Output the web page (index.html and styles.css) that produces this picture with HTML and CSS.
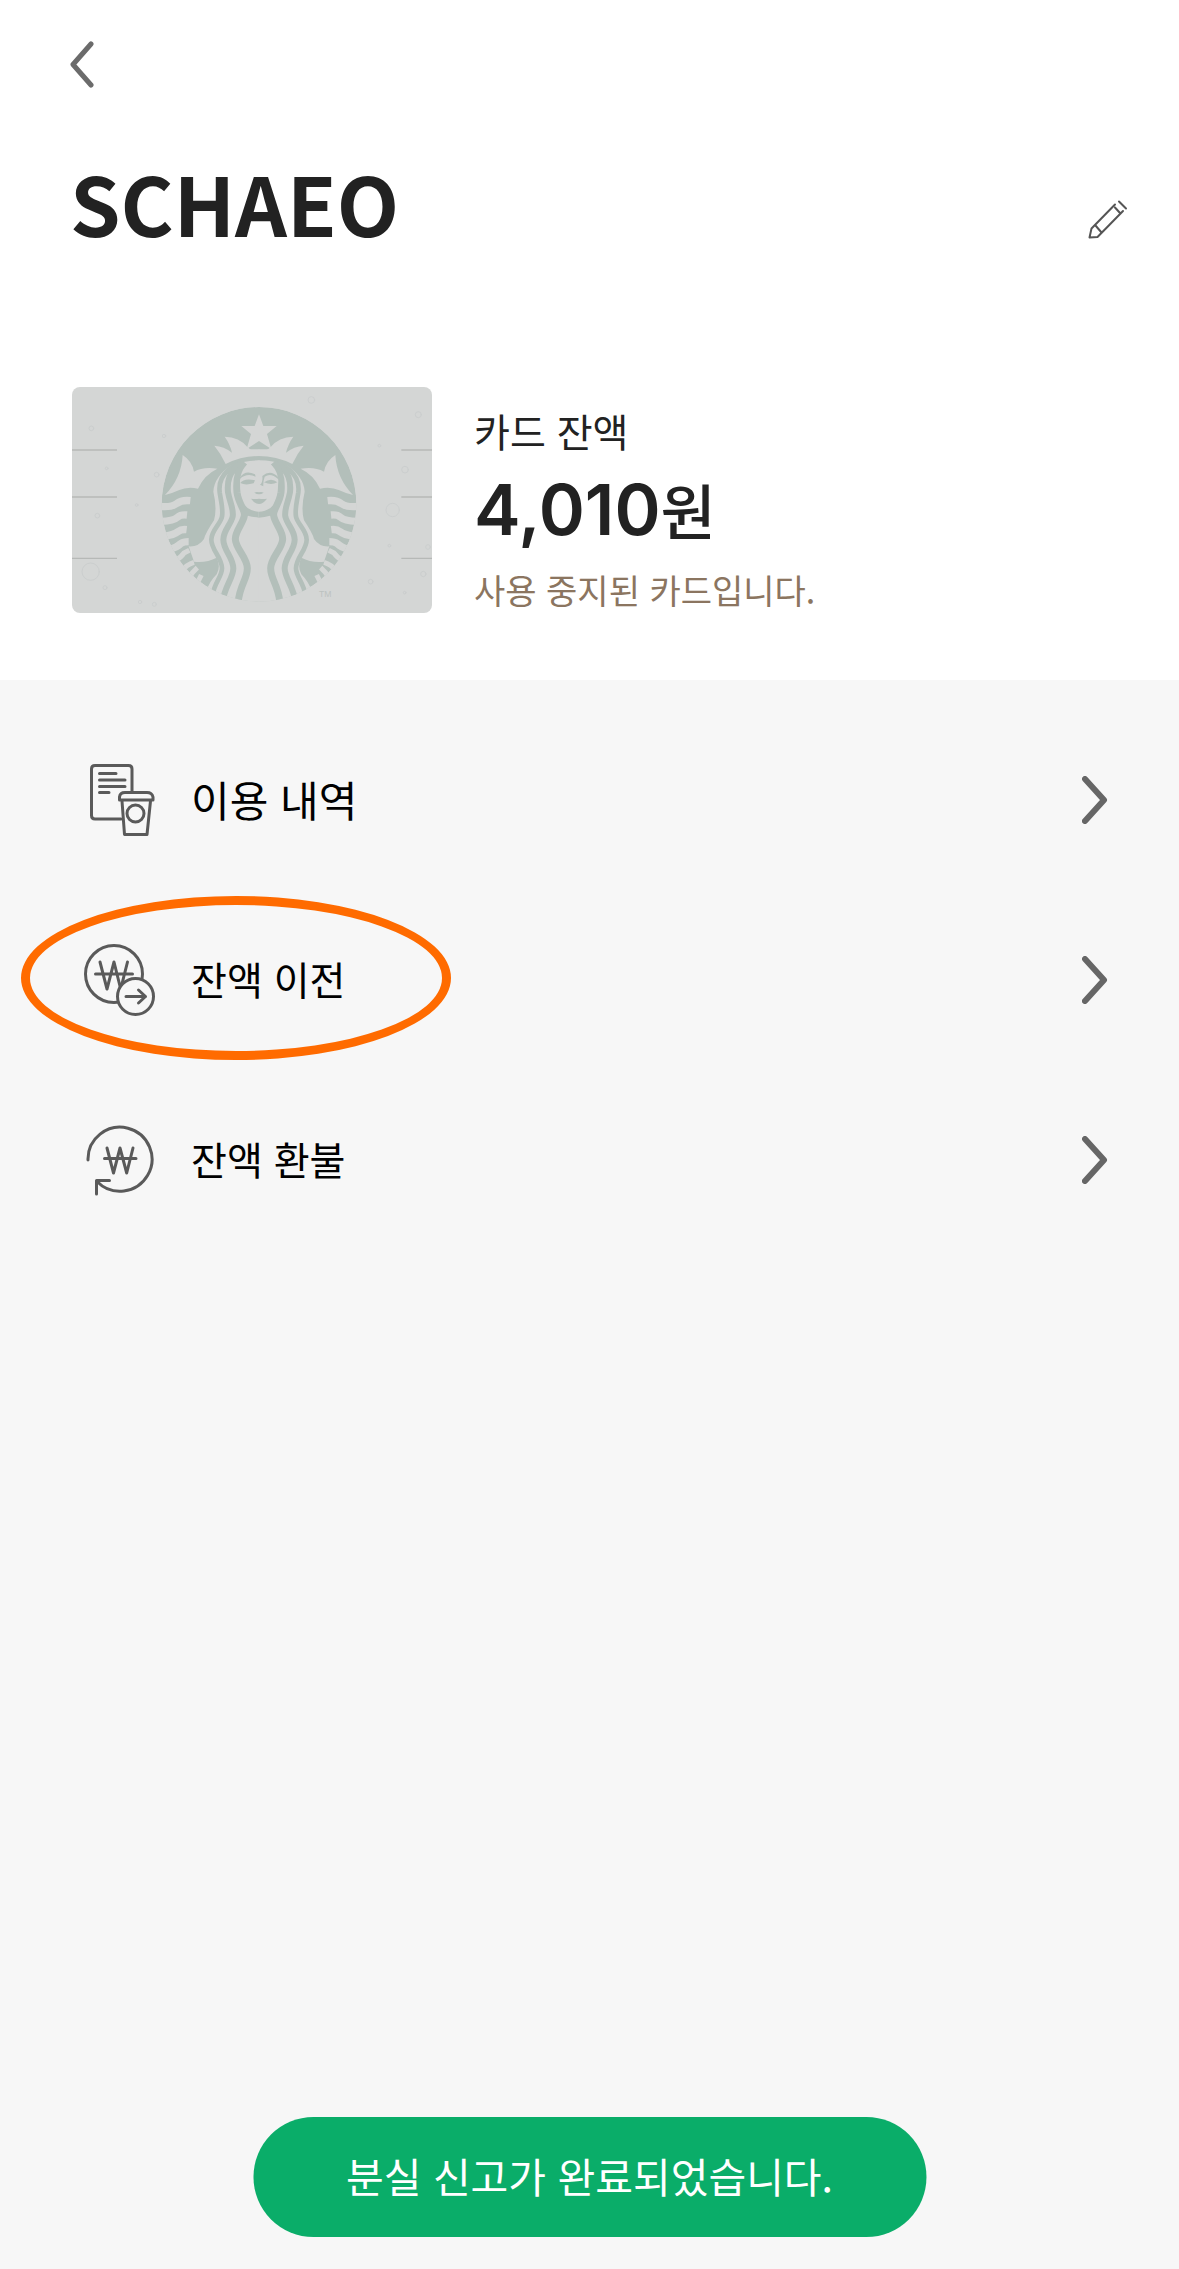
FILE: index.html
```
<!DOCTYPE html>
<html lang="ko">
<head>
    <meta charset="UTF-8">
    <meta name="viewport" content="width=device-width, initial-scale=1.0">
    <title>SCHAEO</title>
    <link rel="stylesheet" href="styles.css">
</head>
<body>
    <header class="header">
        <button class="icon-btn" type="button" aria-label="뒤로">
            <svg class="back-icon" viewBox="0 0 24 48"><path d="M21 4 L3 24.500 L21 45"/></svg>
        </button>
        <div class="title-row">
            <h1>SCHAEO</h1>
            <button class="icon-btn" type="button" aria-label="이름 수정">
                <svg class="edit-icon" viewBox="0 0 40 40"><path d="M27 4.500 L3.500 28.500 L1.500 37.500 L9.500 37 L35 11 M7.500 25.500 L13.500 32.500 M27 7.500 L32 13 M31 1.500 L38 8.500"/></svg>
            </button>
        </div>
    </header>

    <section class="card">
        <svg class="card-image" viewBox="36 36 1080 678" role="img" aria-label="카드 이미지">
            <defs>
                <clipPath id="round"><circle cx="597" cy="388" r="292"/></clipPath>
                <g id="half">
                    <!-- crown and tail -->
                    <path class="light" d="M497 267 Q483 236 463 212 Q492 214 516 233 Q510 207 494 185 Q538 186 562 216 L572 223 L598 223 L598 243 Q545 243 497 267Z"/>
                    <path class="light" d="M315 360 Q364 310 368 240 Q396 258 402 290 Q430 274 472 281 Q432 300 414 341 Q382 334 356 346 Q340 354 315 360Z"/>
                    <!-- scales -->
                    <path class="scale" d="M298 394 Q334 398 350 386 Q365 374 391 377 M300 439 Q340 438 352 427 Q362 418 381 420 M310 484 Q342 480 354 470 Q364 462 380 464 M328 524 Q352 516 362 506 Q370 500 386 500"/>
                    <path class="scale thin" d="M345 558 Q364 546 372 534 L388 526 M366 588 Q380 568 402 562 M386 610 Q396 592 412 578 M408 632 L424 600"/>
                    <!-- hair -->
                    <path class="light" d="M598 256 Q555 256 515 270 Q462 305 460 350 Q472 400 462 436 Q436 475 432 492 Q416 516 386 514 L402 560 Q440 564 470 548 Q483 575 470 598 Q448 620 438 650 L500 700 L598 700Z"/>
                    <path class="hair one" d="M530 266 C482 296 476 325 479 352 C484 385 490 402 486 425 C482 447 454 466 454 494 C454 525 486 548 486 580 C486 606 462 624 458 660"/>
                    <path class="hair two" d="M545 262 C505 292 501 320 504 352 C510 385 522 402 518 425 C512 450 490 466 490 494 C490 525 520 548 520 580 C520 610 494 632 488 680"/>
                    <path class="hair three" d="M553 262 C530 290 528 320 531 352 C535 385 556 405 553 422 C549 447 526 466 526 492 C526 520 562 548 562 580 C562 616 536 632 534 690"/>
                    <path class="green" d="M535 360 Q556 410 598 410 L598 428 Q580 427 564 422 L545 425Z"/>
                </g>
            </defs>
            <rect class="light" x="36" y="36" width="1080" height="678"/>
            <g class="bubbles">
                <circle cx="754" cy="75" r="10"/><circle cx="1075" cy="119" r="9"/>
                <circle cx="94" cy="160" r="7"/><circle cx="312" cy="183" r="5"/>
                <circle cx="290" cy="299" r="7"/><circle cx="140" cy="280" r="4"/>
                <circle cx="1035" cy="284" r="10"/><circle cx="112" cy="422" r="7"/>
                <circle cx="230" cy="390" r="4"/><circle cx="958" cy="212" r="4"/>
                <circle cx="998" cy="405" r="20"/><circle cx="92" cy="590" r="26"/>
                <circle cx="135" cy="638" r="6"/><circle cx="240" cy="681" r="5"/>
                <circle cx="283" cy="688" r="6"/><circle cx="932" cy="620" r="7"/>
                <circle cx="1090" cy="597" r="8"/><circle cx="1104" cy="516" r="7"/>
                <circle cx="988" cy="512" r="4"/><circle cx="1034" cy="653" r="4"/>
            </g>
            <path class="card-lines" d="M36 225 H171 M36 366 H171 M36 550 H171 M1024 225 H1116 M1024 366 H1116 M1024 550 H1116"/>
            <g clip-path="url(#round)">
                <circle class="green" cx="597" cy="388" r="292"/>
                <use href="#half"/>
                <use href="#half" transform="translate(1194 0) scale(-1 1)"/>
                <path class="light" d="M597 118 L610 153 L650 153 L621 177 L634 222 L597 198 L560 222 L573 177 L544 153 L584 153Z"/>
                <path class="green" d="M566 222 L597 203 L629 222Z"/>
                <!-- face -->
                <path class="light" d="M597 257 Q545 260 540 318 Q542 405 597 409 Q652 405 655 318 Q650 260 597 257Z"/>
                <path class="green" d="M540 307 Q556 283 585 298 L587 305 Q562 292 540 311Z M541 324 Q552 308 585 316 L581 325 Q556 332 541 324Z M607 303 Q632 282 655 307 L654 312 Q632 292 614 305 Q609 320 610 334 L600 329 Q609 324 607 303Z M612 322 Q634 306 652 322 Q634 332 612 322Z M583 353 Q590 349 597 352 Q604 349 611 353 Q597 363 583 353Z M573 371 Q586 373 597 371 Q608 373 621 371 Q597 403 573 371Z"/>
            </g>
            <text class="tm" x="777" y="665">TM</text>
        </svg>
        <div class="card-info">
            <p class="label">카드 잔액</p>
            <p class="balance">4,010<span class="won">원</span></p>
            <p class="notice">사용 중지된 카드입니다.</p>
        </div>
    </section>

    <nav class="menu">
        <a class="menu-item" href="#history">
            <svg class="menu-icon" viewBox="0 0 72 72">
                <path d="M48 27 V5 Q48 1.500 44.500 1.500 H11 Q7.500 1.500 7.500 5 V51.500 Q7.500 55 11 55 H37 M15.500 9.500 H32 M15.500 16 H41 M15.500 22.500 H41 M15.500 28.500 H25"/>
                <path d="M35.500 36 V33 Q36 28.500 41 28.500 H63 Q68 28.500 69 33 V36Z M38 37 L40.500 70.500 H63 L66.500 37"/>
                <circle cx="51.500" cy="49.500" r="8.500"/>
            </svg>
            <span class="menu-text large">이용 내역</span>
            <svg class="arrow" viewBox="0 0 26 48"><path d="M3 3 L22 24 L3 45"/></svg>
        </a>
        <a class="menu-item marked" href="#transfer">
            <svg class="menu-icon" viewBox="0 0 72 72">
                <circle cx="30" cy="30" r="28.500"/>
                <path d="M16 18 L23 45 L30 18 L36.700 45 L43.500 18 M11.500 30 H48.500"/>
                <circle class="knockout" cx="51.500" cy="52.500" r="18"/>
                <path d="M42 52.500 H61.500 M54.500 46 L61.500 52.500 L54.500 59"/>
            </svg>
            <span class="menu-text">잔액 이전</span>
            <svg class="arrow" viewBox="0 0 26 48"><path d="M3 3 L22 24 L3 45"/></svg>
        </a>
        <a class="menu-item" href="#refund">
            <svg class="menu-icon" viewBox="0 0 72 72">
                <path d="M4 36 A32 32 0 1 1 13 57.500"/>
                <path d="M25.500 56.500 H12.500 V70 M23 24 L29.500 49 L36 24 L42.700 49 L49 24 M20.500 34.500 H52"/>
            </svg>
            <span class="menu-text">잔액 환불</span>
            <svg class="arrow" viewBox="0 0 26 48"><path d="M3 3 L22 24 L3 45"/></svg>
        </a>
    </nav>

    <div class="toast" role="status">분실 신고가 완료되었습니다.</div>
</body>
</html>
```
FILE: styles.css
```
*, *::after {
    box-sizing: border-box;
}
body {
    display: flex;
    flex-direction: column;
    min-height: 100vh;
    margin: 0;
    background: white;
    color: #222;
    font-family: "Noto Sans CJK KR", sans-serif;
}
h1, p {
    margin: 0;
}
svg {
    display: block;
    flex: none;
    fill: none;
    stroke-linecap: round;
    stroke-linejoin: round;
}
.icon-btn {
    padding: 0;
    border: 0;
    background: none;
    cursor: pointer;
}

/* header */
.header {
    padding: 40px 51px 0 70px;
}
.back-icon {
    width: 24px;
    height: 48px;
    stroke: #6b6b6b;
    stroke-width: 5;
}
.title-row {
    display: flex;
    align-items: center;
    justify-content: space-between;
    height: 120px;
    margin-top: 49px;
}
h1 {
    font-size: 81px;
    line-height: 120px;
    font-weight: 700;
}
.edit-icon {
    width: 40px;
    height: 40px;
    margin-top: 36px;
    stroke: #555;
    stroke-width: 2;
}

/* card */
.card {
    display: flex;
    gap: 42px;
    padding: 125px 72px 60px;
}
.card-image {
    width: 360px;
    height: 226px;
    border-radius: 8px;
}
.light {
    fill: #d4d6d5;
}
.green {
    fill: #b3bfba;
}
.scale {
    stroke: #d4d6d5;
    stroke-width: 22;
    stroke-linecap: butt;
}
.thin {
    stroke-width: 15;
}
.hair {
    stroke: #b3bfba;
    stroke-linecap: butt;
}
.one {
    stroke-width: 14;
}
.two {
    stroke-width: 18;
}
.three {
    stroke-width: 21;
}
.bubbles {
    stroke: #cbcece;
    stroke-width: 3;
}
.card-lines {
    stroke: #b6b9b7;
    stroke-width: 4;
    stroke-linecap: butt;
}
.tm {
    fill: #bcc2c0;
    font-family: "Liberation Sans", sans-serif;
    font-size: 26px;
}
.card-info {
    padding-top: 13px;
}
.label {
    font-size: 39px;
    line-height: 60px;
}
.balance {
    font-family: Inter, "Noto Sans CJK KR", sans-serif;
    font-size: 70px;
    line-height: 100px;
    font-weight: 600;
}
.won {
    font-family: "Noto Sans CJK KR", sans-serif;
    font-size: 60px;
    line-height: 1;
    font-weight: 500;
}
.notice {
    font-size: 34px;
    line-height: 60px;
    color: #8b7560;
}

/* menu */
.menu {
    flex: 1;
    padding: 30px 71px 200px 84px;
    background: #f7f7f7;
}
.menu-item {
    position: relative;
    display: flex;
    align-items: center;
    gap: 35px;
    height: 180px;
    color: black;
    text-decoration: none;
}
.menu-icon {
    width: 72px;
    height: 72px;
    stroke: #5a5a5a;
    stroke-width: 3;
}
.knockout {
    fill: #f7f7f7;
}
.menu-text {
    flex: 1;
    padding-bottom: 4px;
    font-size: 39px;
}
.large {
    font-size: 42px;
}
.arrow {
    width: 26px;
    height: 48px;
    stroke: #666;
    stroke-width: 6;
}
.marked::after {
    content: "";
    position: absolute;
    top: 6px;
    left: -63px;
    width: 430px;
    height: 164px;
    border: 9px solid #ff6b00;
    border-radius: 50%;
}

/* toast */
.toast {
    position: fixed;
    bottom: 32px;
    left: 50%;
    transform: translateX(-50%);
    padding: 0 93px 4px;
    border-radius: 60px;
    background: #0aad69;
    color: white;
    font-size: 41px;
    line-height: 116px;
    white-space: nowrap;
}
```
